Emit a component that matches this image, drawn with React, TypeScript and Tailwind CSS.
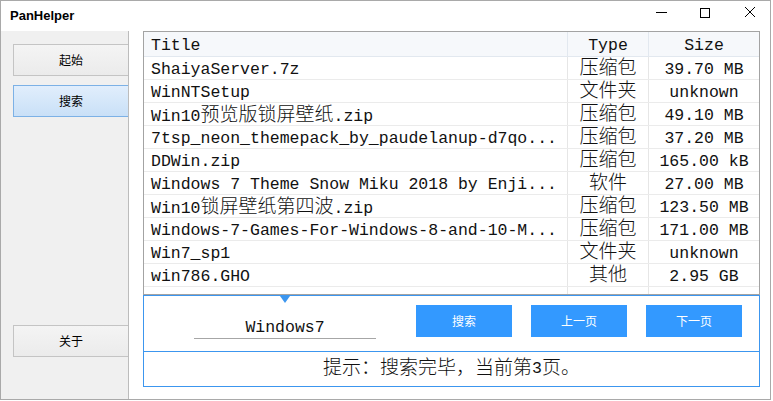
import React from 'react';

const rows: [string, string, string][] = [
    ['ShaiyaServer.7z', '压缩包', '39.70 MB'],
    ['WinNTSetup', '文件夹', 'unknown'],
    ['Win10预览版锁屏壁纸.zip', '压缩包', '49.10 MB'],
    ['7tsp_neon_themepack_by_paudelanup-d7qo...', '压缩包', '37.20 MB'],
    ['DDWin.zip', '压缩包', '165.00 kB'],
    ['Windows 7 Theme Snow Miku 2018 by Enji...', '软件', '27.00 MB'],
    ['Win10锁屏壁纸第四波.zip', '压缩包', '123.50 MB'],
    ['Windows-7-Games-For-Windows-8-and-10-M...', '压缩包', '171.00 MB'],
    ['Win7_sp1', '文件夹', 'unknown'],
    ['win786.GHO', '其他', '2.95 GB'],
];

// SimSun-like: wide CJK next to narrow mono latin
const Txt = ({ s }: { s: string }) => (
    <>
        {s.split(/([\u3000-\u303f\u4e00-\u9fff\uff00-\uffef]+)/).map((p, i) =>
            i % 2 ? (
                <span key={i} className="text-[19px] font-light">
                    {p}
                </span>
            ) : (
                p
            )
        )}
    </>
);

const SideButton = ({ label, active }: { label: string; active?: boolean }) => (
    <div
        className={
            active
                ? 'ml-[12px] h-[32px] flex items-center justify-center border border-r-0 border-[#7cb1e6] bg-gradient-to-b from-[#e1eefc] to-[#c9e0f7] text-[12px] text-black'
                : 'ml-[12px] h-[32px] flex items-center justify-center border border-r-0 border-[#c4c4c4] bg-gradient-to-b from-[#f4f4f4] to-[#ebebeb] text-[12px] text-black'
        }
    >
        {label}
    </div>
);

const BlueButton = ({ label }: { label: string }) => (
    <div className="w-[96px] h-[32px] flex items-center justify-center bg-[#3399ff] text-white text-[12px] font-['Noto_Sans_CJK_SC',sans-serif]">
        {label}
    </div>
);

export default function App() {
    return (
        <div className="w-[771px] h-[400px] border border-[#a9a9a9] bg-white flex flex-col overflow-hidden">
            {/* title bar */}
            <div className="h-[30px] flex items-start bg-white">
                <div className="pl-[9px] pt-[5px] text-[13px] font-bold text-black font-['Liberation_Sans',sans-serif]">
                    PanHelper
                </div>
                <div className="ml-auto flex items-start pt-[5px] pr-[14px]">
                    <svg width="12" height="12" viewBox="0 0 12 12">
                        <line x1="0" y1="6.5" x2="11" y2="6.5" stroke="#000" strokeWidth="1" />
                    </svg>
                    <svg width="12" height="12" viewBox="0 0 12 12" className="ml-[31px]">
                        <rect x="1.5" y="2.5" width="9" height="9" fill="none" stroke="#000" strokeWidth="1" />
                    </svg>
                    <svg width="12" height="12" viewBox="0 0 12 12" className="ml-[33px]">
                        <path d="M1 1 L11 11 M11 1 L1 11" stroke="#000" strokeWidth="1" />
                    </svg>
                </div>
            </div>

            <div className="flex flex-1">
                {/* sidebar */}
                <div className="w-[128px] bg-[#f0f0f0] border-r border-[#bcbcbc] flex flex-col pt-[13px] font-['Noto_Sans_CJK_SC',sans-serif]">
                    <SideButton label="起始" />
                    <div className="mt-[9px]">
                        <SideButton label="搜索" active />
                    </div>
                    <div className="mt-[208px]">
                        <SideButton label="关于" />
                    </div>
                </div>

                {/* main */}
                <div className="flex-1 flex flex-col pl-[14px] pr-[10px] font-['Liberation_Mono','Noto_Sans_CJK_SC',monospace] text-[16.5px] text-[#111]">
                    <div className="h-[264px] border border-[#a3a3a3] flex flex-col">
                        <div className="h-[25px] grid grid-cols-[424px_81px_1fr] bg-[#f6f8fb] border-b border-[#e2e8ef] pt-[3px] leading-[21px]">
                            <div className="pl-[7px] border-r border-[#e2e8ef] -mt-[3px] pt-[3px]">Title</div>
                            <div className="text-center border-r border-[#e2e8ef] -mt-[3px] pt-[3px]">Type</div>
                            <div className="text-center">Size</div>
                        </div>
                        {rows.map(([title, type, size]) => (
                            <div
                                key={title}
                                className="h-[23px] grid grid-cols-[424px_81px_1fr] border-b border-[#ebebeb] leading-[22px] whitespace-pre overflow-hidden"
                            >
                                <div className="pl-[7px] pt-[2px] border-r border-[#e6e6e6] overflow-hidden">
                                    <Txt s={title} />
                                </div>
                                <div className="text-center pt-[1px] border-r border-[#e6e6e6]">
                                    <Txt s={type} />
                                </div>
                                <div className="text-center pt-[2px]">{size}</div>
                            </div>
                        ))}
                        <div className="flex-1 grid grid-cols-[424px_81px_1fr]">
                            <div className="border-r border-[#e6e6e6]" />
                            <div className="border-r border-[#e6e6e6]" />
                            <div />
                        </div>
                    </div>

                    <div className="h-[92px] border border-[#3c96ef] flex flex-col">
                        <div className="relative h-[56px] flex items-start border-b border-[#3c96ef]">
                            <div className="absolute left-[136px] top-0 w-0 h-0 border-l-[5px] border-r-[5px] border-t-[7px] border-l-transparent border-r-transparent border-t-[#3c96ef]" />
                            <div className="ml-[50px] mt-[19px] w-[182px] h-[24px] border-b border-[#a6a6a6] text-center pt-[2px] leading-[21px]">
                                Windows7
                            </div>
                            <div className="ml-[40px] mt-[9px] flex gap-[19px]">
                                <BlueButton label="搜索" />
                                <BlueButton label="上一页" />
                                <BlueButton label="下一页" />
                            </div>
                        </div>
                        <div className="flex-1 flex items-center justify-center">
                            <Txt s="提示：搜索完毕，当前第3页。" />
                        </div>
                    </div>
                </div>
            </div>
        </div>
    );
}
